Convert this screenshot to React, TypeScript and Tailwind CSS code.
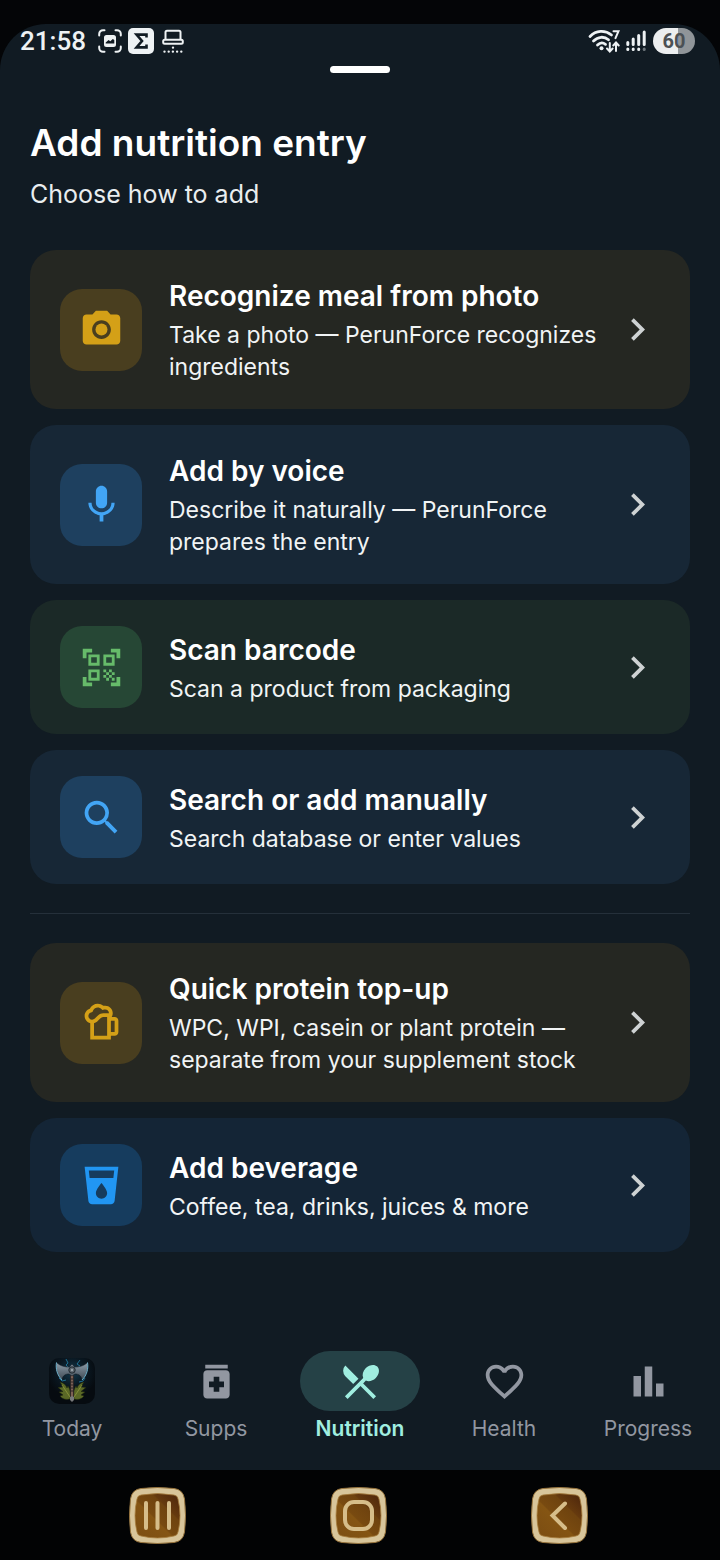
import type { ReactNode } from "react";
import type { IconType } from "react-icons";
import {
  MdBarChart,
  MdCameraAlt,
  MdChevronRight,
  MdFavoriteBorder,
  MdLocalDrink,
  MdMedication,
  MdMic,
  MdOutlineSportsBar,
  MdQrCodeScanner,
  MdRestaurantMenu,
  MdSearch,
} from "react-icons/md";

type Option = {
  title: string;
  text: string;
  icon: IconType;
  card: string;
  tile: string;
};

const options: Option[] = [
  {
    title: "Recognize meal from photo",
    text: "Take a photo — PerunForce recognizes ingredients",
    icon: MdCameraAlt,
    card: "bg-[#252722]",
    tile: "bg-[#493e1f] text-[#d4a017]",
  },
  {
    title: "Add by voice",
    text: "Describe it naturally — PerunForce prepares the entry",
    icon: MdMic,
    card: "bg-[#172736]",
    tile: "bg-[#1e405f] text-[#42a5f5]",
  },
  {
    title: "Scan barcode",
    text: "Scan a product from packaging",
    icon: MdQrCodeScanner,
    card: "bg-[#1b2927]",
    tile: "bg-[#264735] text-[#66bb6a]",
  },
  {
    title: "Search or add manually",
    text: "Search database or enter values",
    icon: MdSearch,
    card: "bg-[#172736]",
    tile: "bg-[#1e405f] text-[#42a5f5]",
  },
];

const extraOptions: Option[] = [
  {
    title: "Quick protein top-up",
    text: "WPC, WPI, casein or plant protein — separate from your supplement stock",
    icon: MdOutlineSportsBar,
    card: "bg-[#252722]",
    tile: "bg-[#493e1f] text-[#d4a017]",
  },
  {
    title: "Add beverage",
    text: "Coffee, tea, drinks, juices & more",
    icon: MdLocalDrink,
    card: "bg-[#142536]",
    tile: "bg-[#163c5e] text-[#2196f3]",
  },
];

const OptionCard = ({ option }: { option: Option }) => {
  const Icon = option.icon;
  return (
    <button
      type="button"
      className={`flex w-full items-center rounded-[26px] px-[30px] py-[26px] text-left ${option.card}`}
    >
      <span
        className={`flex size-[82px] shrink-0 items-center justify-center rounded-[22px] ${option.tile}`}
      >
        <Icon className="size-[45px]" />
      </span>
      <span className="ml-[27px] flex-1">
        <span className="mb-[3px] block text-[28px] leading-10 font-semibold text-white">
          {option.title}
        </span>
        <span className="block text-[23px] leading-8 text-[#f1f4f5]">{option.text}</span>
      </span>
      <MdChevronRight className="size-[45px] shrink-0 text-[#ced2d3]" />
    </button>
  );
};

const StatusBar = () => {
  return (
    <div className="flex h-[34px] items-center pr-[25px] pl-5 text-[#eef2f4]">
      <span className="font-['Roboto'] text-[26px] leading-8 font-medium">21:58</span>

      {/* Notification icons */}
      <svg className="ml-3 size-6" viewBox="0 0 24 24" fill="none" stroke="currentColor" strokeWidth="2" strokeLinecap="round">
        <path d="M1.2 6.500V5A3.800 3.800 0 0 1 5 1.200H6.500M17.500 1.200H19A3.800 3.800 0 0 1 22.800 5V6.500M22.800 17.500V19A3.800 3.800 0 0 1 19 22.800H17.500M6.500 22.800H5A3.800 3.800 0 0 1 1.200 19V17.500" />
        <path fill="currentColor" stroke="none" fillRule="evenodd" d="M8.500 6h7A2.500 2.500 0 0 1 18 8.500v7a2.500 2.500 0 0 1-2.500 2.500h-7A2.500 2.500 0 0 1 6 15.500v-7A2.500 2.500 0 0 1 8.500 6zM7.700 14.500h8.600v-3.600l-1.500-1-2.500 2.400-1.700-1.300-2.900 2.400z" />
      </svg>
      <svg className="ml-1.5 size-[26px]" viewBox="0 0 26 26">
        <rect width="26" height="26" rx="5" fill="#eef2f4" />
        <path d="M18.500 9.500V6.600H8.500l5.500 6.400-5.500 6.400h10V16.500" fill="none" stroke="#111b23" strokeWidth="2.600" />
      </svg>
      <svg className="ml-2 h-6 w-[22px]" viewBox="0 0 22 24" fill="none" stroke="currentColor" strokeWidth="2">
        <path d="M3.500 11V3.300A1.500 1.500 0 0 1 5 1.800h12a1.500 1.500 0 0 1 1.500 1.500V11" />
        <rect x="1.200" y="10.800" width="19.600" height="4" rx="1.500" />
        <path strokeWidth="2.400" strokeLinecap="round" strokeDasharray="0 4.200" d="M2.500 22.600H20M11 18.600h.1" />
      </svg>

      {/* Connection and battery */}
      <svg className="ml-auto h-6 w-8" viewBox="0 0 32 24" fill="none" stroke="currentColor" strokeWidth="2.800" strokeLinecap="round">
        <path d="M2 7.500C8 1.200 17 .8 23.500 6M5.500 12c4.500-4.500 10.500-5 15-1.200M9.500 16c2.600-2.500 5.500-2.600 8-.7" />
        <circle cx="13.500" cy="19.200" r="2" fill="currentColor" stroke="none" />
        <path strokeWidth="2" d="M25.500 2.200h5l-3 7M21.800 14v8M19 19.500l2.800 3 2.800-3M28 22v-8M25.300 16.500l2.700-3 2.700 3" />
      </svg>
      <svg className="ml-1.5 h-[22px] w-5" viewBox="0 0 20 22" stroke="currentColor" strokeWidth="3" strokeLinecap="round">
        <path d="M1.800 12.500v2M7.200 9v5.500M12.700 5.500v9M18.200 2v12.500M1.800 19v.4M7.200 19v.4M12.700 19v.4" />
        <path d="M18.200 19v.4" stroke="#6d757b" />
      </svg>
      <span className="ml-[7px] flex h-[26px] w-[42px] items-center justify-center rounded-full bg-linear-to-r from-[#eceeef] from-60% to-[#909599] to-60% font-['Roboto'] text-[20px] font-bold text-[#4b5054]">
        60
      </span>
    </div>
  );
};

const AppLogo = () => {
  return (
    <svg className="size-[46px]" viewBox="0 0 46 46">
      <defs>
        <radialGradient id="storm" cx=".5" cy=".3" r=".55">
          <stop offset="0" stopColor="#12394d" />
          <stop offset=".55" stopColor="#0a1822" />
          <stop offset="1" stopColor="#060b10" />
        </radialGradient>
        <linearGradient id="blade" x1="0" y1="0" x2="0" y2="1">
          <stop offset="0" stopColor="#8f9eaa" />
          <stop offset=".6" stopColor="#5d6a75" />
          <stop offset="1" stopColor="#414d57" />
        </linearGradient>
      </defs>
      <rect width="46" height="46" rx="10" fill="url(#storm)" />
      <path d="M17 1l2 4-2 2 3 3M31 2l-3 4 3 2-4 3M10 20l3 3 4-1M36 20l-2 3-4 1" fill="none" stroke="#2484ac" strokeWidth=".8" />
      {/* Oak leaves */}
      <g fill="#5a6826" stroke="#1f260d" strokeWidth=".5">
        <path d="M21 41c-4 1-8 0-10-3l3-1-4-3 4-.500-5-4 5-.500-3-5c4 1 6 3 7 6l1-2c2 3 3 7 2 13z" />
        <path d="M25 41c4 1 8 0 10-3l-3-1 4-3-4-.500 5-4-5-.500 3-5c-4 1-6 3-7 6l-1-2c-2 3-3 7-2 13z" />
      </g>
      <path d="M13 27l4 6 4 6M33 27l-4 6-4 6" fill="none" stroke="#98a040" strokeWidth=".7" />
      {/* Double axe */}
      <path d="M21.500 13h3v27l-1.500 3-1.500-3z" fill="#7c6055" stroke="#1c1818" strokeWidth=".6" />
      <path d="M21.500 21h3M21.500 24h3M21.500 27h3M21.500 30h3M21.500 33h3" stroke="#2b2526" />
      <path d="M23 6l2.500 3c5 0 9-1 13-4.500 1 6-.5 12.500-5.500 17.500-.5-4-3-6-7-6L23 18l-3-2c-4 0-6.500 2-7 6-5-5-6.500-11.500-5.500-17.500 4 3.500 8 4.500 13 4.500z" fill="url(#blade)" stroke="#101a22" strokeWidth=".6" />
      <path d="M7.500 4.500c-1 6 .5 12.500 5.500 17.500M38.500 4.500c1 6-.5 12.500-5.500 17.500" fill="none" stroke="#79c3e0" strokeWidth=".9" />
      <circle cx="23" cy="12" r="3.200" fill="#5a646c" stroke="#1f282f" />
      <circle cx="23" cy="12" r="1.200" fill="#98a2a8" />
      <path d="M21 39l2-1 2 1v3l-2 2-2-2z" fill="#77797a" />
    </svg>
  );
};

const NavItem = ({
  label,
  active = false,
  children,
}: {
  label: string;
  active?: boolean;
  children: ReactNode;
}) => {
  return (
    <a
      href="#"
      aria-current={active ? "page" : undefined}
      className={`flex flex-1 flex-col items-center ${active ? "font-semibold text-[#a0eee0]" : "text-[#9297a1]"}`}
    >
      <span
        className={`flex h-[60px] w-[120px] items-center justify-center rounded-full ${active ? "bg-[#254146]" : ""}`}
      >
        {children}
      </span>
      <span className="mt-0.5 text-[21px] leading-8">{label}</span>
    </a>
  );
};

const SystemButton = ({ label, children }: { label: string; children: ReactNode }) => {
  return (
    <button type="button" aria-label={label}>
      <svg className="size-[57px]" viewBox="0 0 57 57" fill="none">
        <defs>
          <linearGradient id="wood" x1="1" y1="0" x2="0" y2="1">
            <stop offset="0" stopColor="#4b240c" />
            <stop offset=".3" stopColor="#663a0e" />
            <stop offset=".32" stopColor="#6f430f" />
            <stop offset=".55" stopColor="#784a10" />
            <stop offset=".57" stopColor="#855513" />
            <stop offset="1" stopColor="#7b4d12" />
          </linearGradient>
        </defs>
        <path d="M12 1.500Q28.500-.5 45 1.500Q54 2.500 55.500 12Q57.500 28.500 55.500 45Q54 54.500 45 55.500Q28.500 57.500 12 55.500Q3 54.500 1.500 45Q-.5 28.500 1.500 12Q3 2.500 12 1.500Z" fill="#d8c59a" stroke="#96733c" />
        <path d="M12 8Q28.500 5 45 8Q48.500 8.500 49 12Q53 28.500 49 45Q48.500 48.500 45 49Q28.500 53 12 49Q8.500 48.500 8 45Q4 28.500 8 12Q8.500 8.500 12 8Z" fill="url(#wood)" stroke="#a77e3d" strokeWidth=".8" />
        <g stroke="#d6bd89" strokeWidth="4" strokeLinecap="round">
          {children}
        </g>
      </svg>
    </button>
  );
};

const App = () => {
  return (
    <div className="flex min-h-screen flex-col bg-[#040507] pt-6 font-['Inter',sans-serif]">
      <main className="flex flex-1 flex-col rounded-t-[46px] bg-[#111b23]">
        <StatusBar />
        <div className="mx-auto mt-2 h-[7px] w-[60px] rounded-full bg-white" />

        <header className="mt-[46px] px-[30px]">
          <h1 className="text-[37px] leading-12 font-semibold text-white">Add nutrition entry</h1>
          <p className="mt-[11px] text-[25px] leading-8 text-[#e9edef]">Choose how to add</p>
        </header>

        <section className="mt-10 px-[30px]">
          <div className="flex flex-col gap-4">
            {options.map((option) => (
              <OptionCard key={option.title} option={option} />
            ))}
          </div>
          <hr className="my-[29px] border-[#25303a]" />
          <div className="flex flex-col gap-4">
            {extraOptions.map((option) => (
              <OptionCard key={option.title} option={option} />
            ))}
          </div>
        </section>

        <nav className="mt-auto flex pt-10 pb-[25px]">
          <NavItem label="Today">
            <AppLogo />
          </NavItem>
          <NavItem label="Supps">
            <MdMedication className="size-[45px]" />
          </NavItem>
          <NavItem label="Nutrition" active>
            <MdRestaurantMenu className="size-[45px]" />
          </NavItem>
          <NavItem label="Health">
            <MdFavoriteBorder className="size-[45px]" />
          </NavItem>
          <NavItem label="Progress">
            <MdBarChart className="size-[45px]" />
          </NavItem>
        </nav>
      </main>

      {/* Android navigation keys */}
      <div className="flex h-[90px] items-center justify-center gap-36 bg-[#020304] pr-[3px]">
        <SystemButton label="Recent apps">
          <path d="M17 16v25M28.500 16v25M40 16v25" />
        </SystemButton>
        <SystemButton label="Home">
          <rect x="15" y="15" width="27" height="27" rx="9" />
        </SystemButton>
        <SystemButton label="Back">
          <path d="M34 16.500L21.500 28.500L34 41" />
        </SystemButton>
      </div>
    </div>
  );
};

export default App;
